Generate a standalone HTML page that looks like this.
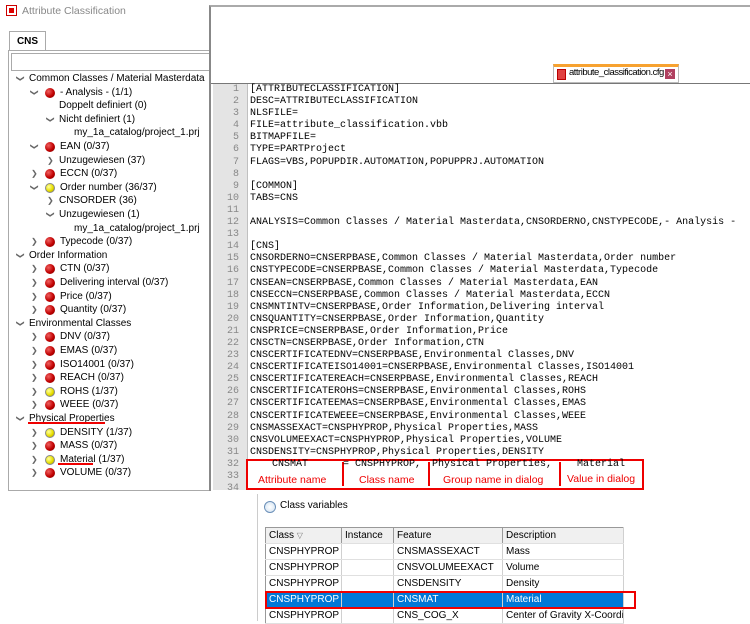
<!DOCTYPE html>
<html><head><meta charset="utf-8"><style>
*{margin:0;padding:0;box-sizing:border-box}
body{width:750px;height:621px;background:#fff;position:relative;overflow:hidden;font-family:"Liberation Sans",sans-serif;font-size:10px;color:#000}
.a{position:absolute;white-space:nowrap}
.row{position:absolute;height:14px;line-height:14px;white-space:nowrap;font-size:10px}
.dot{position:absolute;width:10px;height:10px;border-radius:50%;top:2px}
.r{background:radial-gradient(circle at 35% 35%,#f06060,#c00000 55%,#700000)}
.y{background:radial-gradient(circle at 35% 35%,#ffffa0,#e8e000 55%,#a09000);border:1px solid #888}
.chv{position:absolute;font-size:8px;color:#666;top:0}
.code{position:absolute;left:250px;font-family:"Liberation Mono",monospace;font-size:10px;line-height:12.1px;white-space:pre;color:#000}
.ln{position:absolute;left:213px;width:26px;text-align:right;font-family:"Liberation Mono",monospace;font-size:10px;line-height:12.1px;color:#888;white-space:pre}
table{table-layout:fixed}
td{border-right:1px solid #d0d0d0;border-bottom:1px solid #e0e0e0;height:16px;padding:0 3px;font-size:10px;white-space:nowrap;overflow:hidden}
</style></head><body>
<div class="a" style="left:6px;top:5px;width:11px;height:11px;border:1px solid #c00;background:#fff"><div style="position:absolute;left:2px;top:2px;width:5px;height:5px;background:#d00"></div></div>
<div class="a" style="left:22px;top:5px;font-size:10.5px;color:#888">Attribute Classification</div>
<div class="a" style="left:9px;top:31px;width:37px;height:20px;border:1px solid #aaa;border-bottom:none;background:#fff;font-weight:bold;text-align:center;line-height:19px;font-size:10px">CNS</div>
<div class="a" style="left:8px;top:50px;width:205px;height:441px;border:1px solid #aaa;border-right:none"></div>
<div class="a" style="left:11px;top:53px;width:202px;height:18px;border:1px solid #aaa"></div>
<div id="tree"></div>
<div class="a" style="left:209px;top:5px;width:541px;height:486px;border-left:2px solid #888;border-top:2px solid #aaa;background:#fff"></div>
<div class="a" style="left:211px;top:83px;width:539px;height:1px;background:#777"></div>
<div class="a" style="left:553px;top:64px;width:126px;height:19px;border:1px solid #bbb;border-top:3px solid #f7a230;background:#fff"></div>
<div class="a" style="left:557px;top:69px;width:9px;height:11px;background:#e04040;border:1px solid #b00"></div>
<div class="a" style="left:569px;top:67px;font-size:9.5px;letter-spacing:-0.5px">attribute_classification.cfg</div>
<div class="a" style="left:665px;top:69px;width:10px;height:10px;background:#b04060;color:#fff;font-size:9px;line-height:10px;text-align:center">×</div>
<div class="a" style="left:213px;top:84px;width:35px;height:406px;background:#e4e4e4;border-right:1px solid #c0c0c0"></div>
<div class="ln" style="top:84px">1
2
3
4
5
6
7
8
9
10
11
12
13
14
15
16
17
18
19
20
21
22
23
24
25
26
27
28
29
30
31
32
33
34</div>
<div class="code" style="top:84px">[ATTRIBUTECLASSIFICATION]
DESC=ATTRIBUTECLASSIFICATION
NLSFILE=
FILE=attribute_classification.vbb
BITMAPFILE=
TYPE=PARTProject
FLAGS=VBS,POPUPDIR.AUTOMATION,POPUPPRJ.AUTOMATION

[COMMON]
TABS=CNS

ANALYSIS=Common Classes / Material Masterdata,CNSORDERNO,CNSTYPECODE,- Analysis -

[CNS]
CNSORDERNO=CNSERPBASE,Common Classes / Material Masterdata,Order number
CNSTYPECODE=CNSERPBASE,Common Classes / Material Masterdata,Typecode
CNSEAN=CNSERPBASE,Common Classes / Material Masterdata,EAN
CNSECCN=CNSERPBASE,Common Classes / Material Masterdata,ECCN
CNSMNTINTV=CNSERPBASE,Order Information,Delivering interval
CNSQUANTITY=CNSERPBASE,Order Information,Quantity
CNSPRICE=CNSERPBASE,Order Information,Price
CNSCTN=CNSERPBASE,Order Information,CTN
CNSCERTIFICATEDNV=CNSERPBASE,Environmental Classes,DNV
CNSCERTIFICATEISO14001=CNSERPBASE,Environmental Classes,ISO14001
CNSCERTIFICATEREACH=CNSERPBASE,Environmental Classes,REACH
CNSCERTIFICATEROHS=CNSERPBASE,Environmental Classes,ROHS
CNSCERTIFICATEEMAS=CNSERPBASE,Environmental Classes,EMAS
CNSCERTIFICATEWEEE=CNSERPBASE,Environmental Classes,WEEE
CNSMASSEXACT=CNSPHYPROP,Physical Properties,MASS
CNSVOLUMEEXACT=CNSPHYPROP,Physical Properties,VOLUME
CNSDENSITY=CNSPHYPROP,Physical Properties,DENSITY</div>
<div class="a" style="left:246px;top:459px;width:398px;height:31px;border:2px solid #e00;background:#fff"></div>
<div class="a" style="left:342px;top:462px;width:2px;height:24px;background:#e00"></div>
<div class="a" style="left:428px;top:462px;width:2px;height:24px;background:#e00"></div>
<div class="a" style="left:559px;top:462px;width:2px;height:24px;background:#e00"></div>
<div class="code" style="left:272px;top:459px">CNSMAT</div>
<div class="code" style="left:343px;top:459px">= CNSPHYPROP,</div>
<div class="code" style="left:432px;top:459px">Physical Properties,</div>
<div class="code" style="left:577px;top:459px">Material</div>
<div class="a" style="left:258px;top:474px;color:#e00;font-size:10.5px">Attribute name</div>
<div class="a" style="left:359px;top:474px;color:#e00;font-size:10.5px">Class name</div>
<div class="a" style="left:443px;top:474px;color:#e00;font-size:10.5px">Group name in dialog</div>
<div class="a" style="left:567px;top:473px;color:#e00;font-size:10.5px">Value in dialog</div>
<div class="a" style="left:257px;top:494px;width:1px;height:127px;background:#ccc"></div>
<div class="a" style="left:264px;top:501px;width:12px;height:12px;border-radius:50%;border:1px solid #6a8fb8;background:radial-gradient(circle,#fff,#cfe0f0)"></div>
<div class="a" style="left:280px;top:500px;font-size:10px">Class variables</div>
<table class="a" style="left:265px;top:527px;width:358px;border-collapse:collapse;border-left:1px solid #999;border-top:1px solid #999">
<colgroup><col style="width:76px"><col style="width:52px"><col style="width:109px"><col style="width:121px"></colgroup>
<tr style="background:#f0f0f0"><td style="border-right:1px solid #999">Class <span style="font-size:8px;color:#777">▽</span></td><td style="border-right:1px solid #999">Instance</td><td style="border-right:1px solid #999">Feature</td><td>Description</td></tr>
<tr><td>CNSPHYPROP</td><td></td><td>CNSMASSEXACT</td><td>Mass</td></tr>
<tr><td>CNSPHYPROP</td><td></td><td>CNSVOLUMEEXACT</td><td>Volume</td></tr>
<tr><td>CNSPHYPROP</td><td></td><td>CNSDENSITY</td><td>Density</td></tr>
<tr style="background:#0078d7;color:#fff"><td>CNSPHYPROP</td><td></td><td>CNSMAT</td><td>Material</td></tr>
<tr><td>CNSPHYPROP</td><td></td><td>CNS_COG_X</td><td>Center of Gravity X-Coordinate</td></tr>
</table>
<div class="a" style="left:265px;top:591px;width:371px;height:18px;border:2px solid #e00"></div>
<script>
var rows=[
[0,'v',null,'Common Classes / Material Masterdata'],
[1,'v','r','- Analysis - (1/1)'],
[2,'',null,'Doppelt definiert (0)'],
[2,'v',null,'Nicht definiert (1)'],
[3,'',null,'my_1a_catalog/project_1.prj'],
[1,'v','r','EAN (0/37)'],
[2,'>',null,'Unzugewiesen (37)'],
[1,'>','r','ECCN (0/37)'],
[1,'v','y','Order number (36/37)'],
[2,'>',null,'CNSORDER (36)'],
[2,'v',null,'Unzugewiesen (1)'],
[3,'',null,'my_1a_catalog/project_1.prj'],
[1,'>','r','Typecode (0/37)'],
[0,'v',null,'Order Information'],
[1,'>','r','CTN (0/37)'],
[1,'>','r','Delivering interval (0/37)'],
[1,'>','r','Price (0/37)'],
[1,'>','r','Quantity (0/37)'],
[0,'v',null,'Environmental Classes'],
[1,'>','r','DNV (0/37)'],
[1,'>','r','EMAS (0/37)'],
[1,'>','r','ISO14001 (0/37)'],
[1,'>','r','REACH (0/37)'],
[1,'>','y','ROHS (1/37)'],
[1,'>','r','WEEE (0/37)'],
[0,'v',null,'Physical Properties'],
[1,'>','y','DENSITY (1/37)'],
[1,'>','r','MASS (0/37)'],
[1,'>','y','Material (1/37)'],
[1,'>','r','VOLUME (0/37)']];
var h='';
rows.forEach(function(r,i){
 var top=72+i*13.6, lv=r[0];
 var cx=[17,31,47,62][lv];
 var tx=r[2]?60:[29,60,59,74][lv];
 if(r[1]) h+='<div class="chv a" style="left:'+cx+'px;top:'+(top+2)+'px;transform:'+(r[1]=='v'?'rotate(90deg)':'none')+'">❯</div>';
 if(r[2]) h+='<div class="dot a '+r[2]+'" style="left:45px;top:'+(top+2)+'px"></div>';
 h+='<div class="row" style="left:'+tx+'px;top:'+top+'px">'+r[3]+'</div>';
});
h+='<div class="a" style="left:28px;top:422px;width:77px;height:2px;background:#e00"></div>';
h+='<div class="a" style="left:58px;top:463px;width:35px;height:2px;background:#e00"></div>';
document.getElementById('tree').innerHTML=h;
</script>
</body></html>
